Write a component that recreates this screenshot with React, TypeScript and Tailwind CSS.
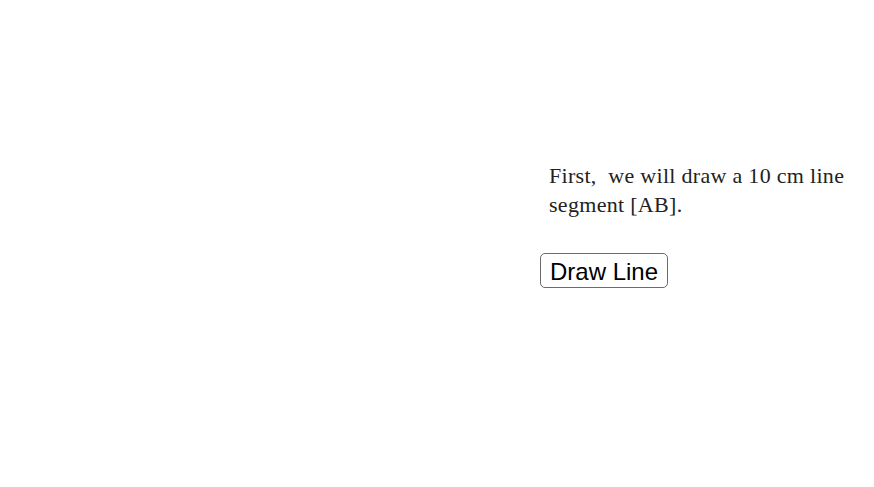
export default function App() {
  return (
    <div className="flex h-[487px] w-[874px] bg-white">
      <div className="w-[540px] shrink-0" />
      <div className="flex flex-col items-start pt-[161px]">
        <p
          className="ml-[9px] w-[320px] text-[22px] leading-[29px] tracking-[0.3px] text-[#222]"
          style={{ fontFamily: '"Liberation Serif", serif' }}
        >
          First,&nbsp; we will draw a 10 cm line segment [AB].
        </p>
        <button
          type="button"
          className="mt-[34px] h-[35px] w-[128px] rounded-[5px] border border-[#6b6b6b] bg-white text-[24px] text-black"
          style={{ fontFamily: '"Liberation Sans", Arial, sans-serif' }}
        >
          Draw Line
        </button>
      </div>
    </div>
  );
}
